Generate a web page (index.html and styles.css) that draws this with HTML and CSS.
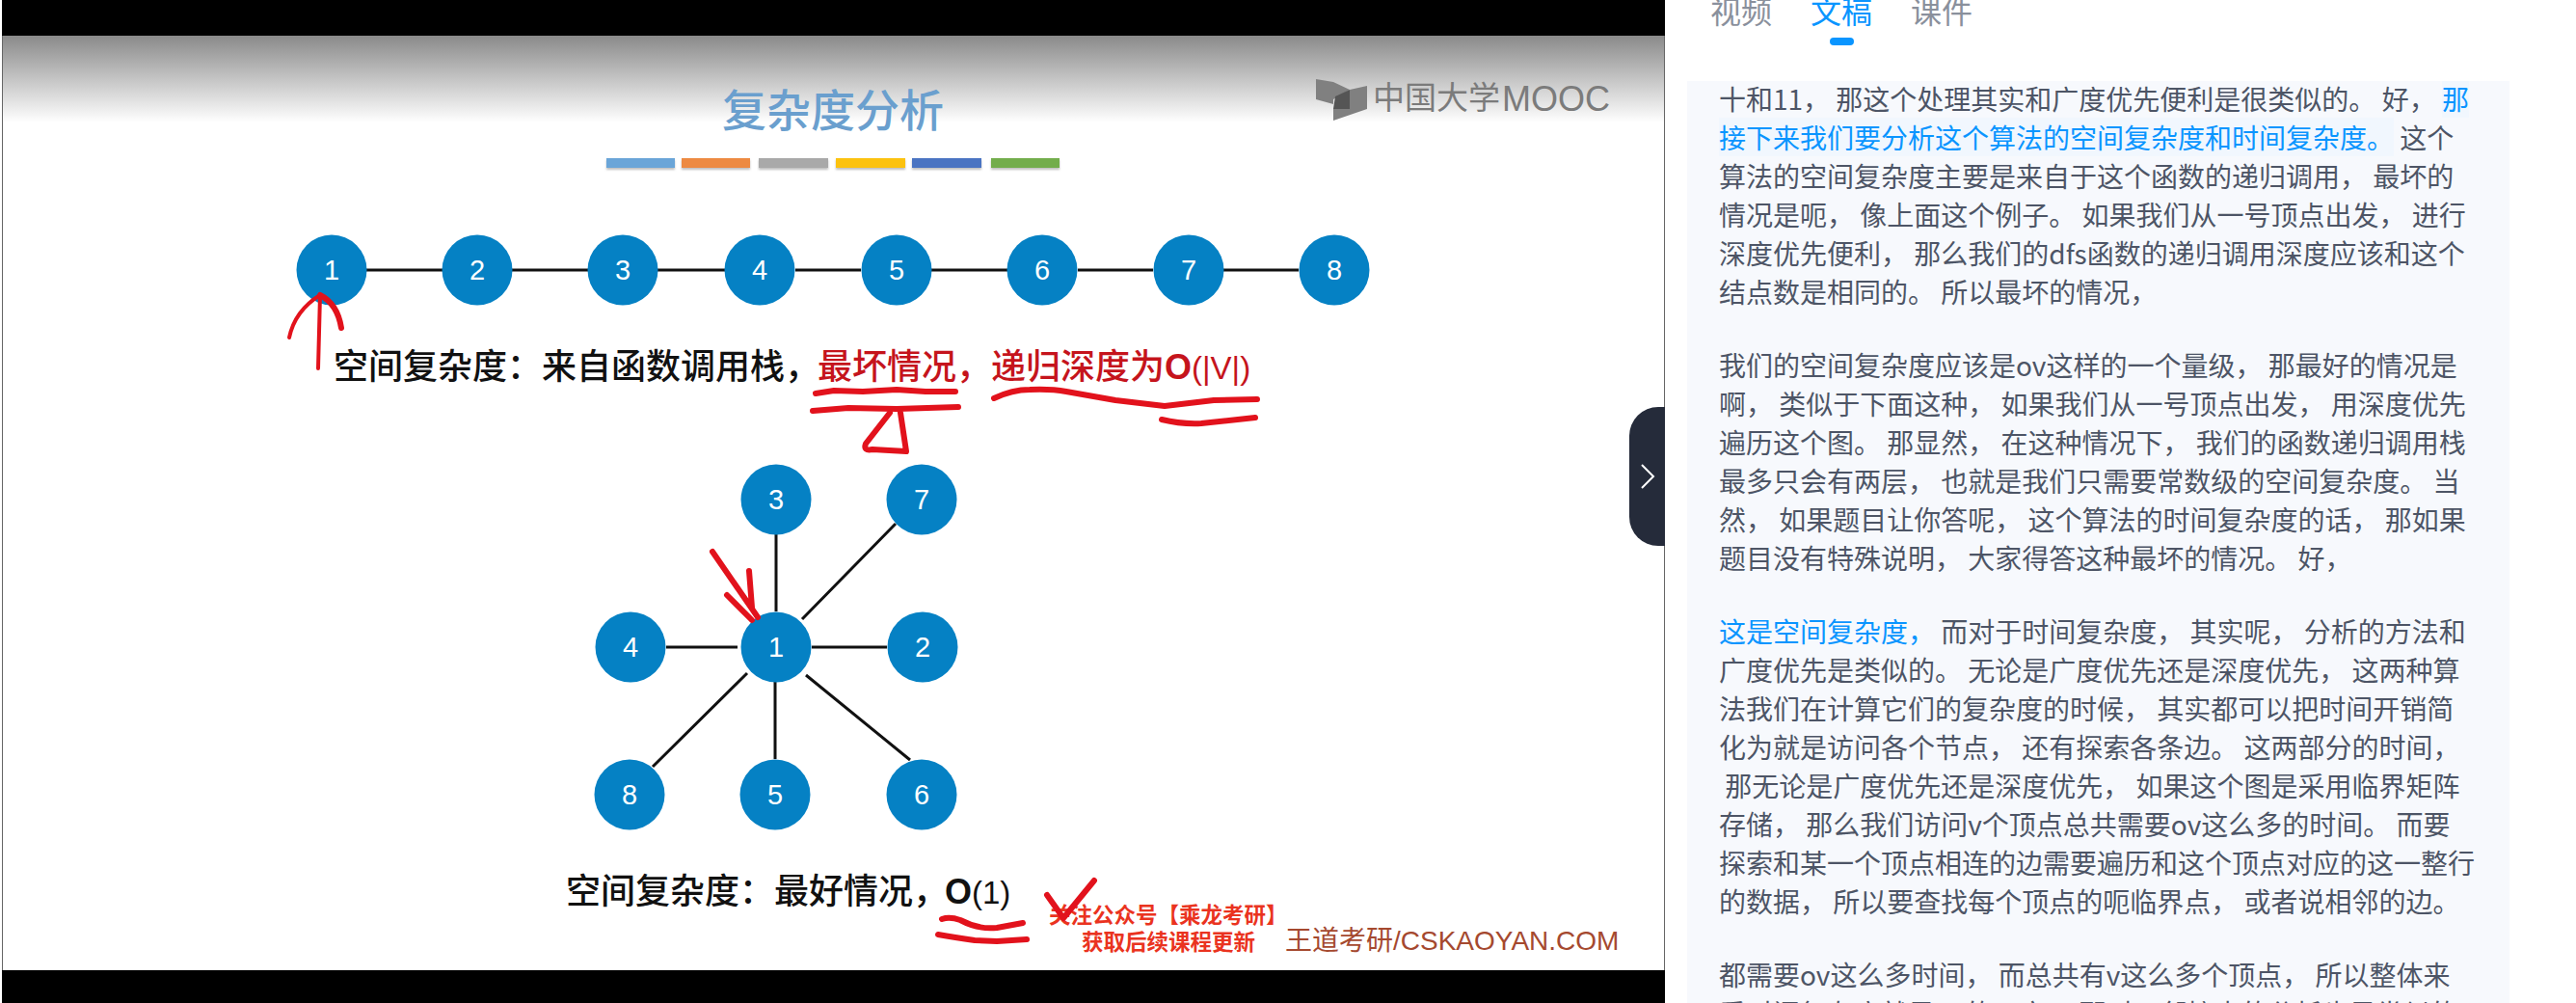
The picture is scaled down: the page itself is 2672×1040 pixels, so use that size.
FILE: index.html
```html
<!DOCTYPE html>
<html lang="zh-CN">
<head>
  <meta charset="UTF-8" />
  <title>复杂度分析</title>
  <link rel="stylesheet" href="styles.css">
</head>
<body>

  <div class="page">
    <div class="player">
      <div class="slide">
        <svg class="slide-art" viewBox="2 37 1725 969" width="1725" height="969">
          <text class="title" x="749" y="131">复杂度分析</text>
          <rect class="bar" x="629" y="164" width="71" height="10" fill="#6aa5d8"/>
          <rect class="bar" x="707" y="164" width="71" height="10" fill="#ed8a42"/>
          <rect class="bar" x="787" y="164" width="72" height="10" fill="#a9a9a9"/>
          <rect class="bar" x="867" y="164" width="72" height="10" fill="#fcc20f"/>
          <rect class="bar" x="946" y="164" width="72" height="10" fill="#4a74c2"/>
          <rect class="bar" x="1028" y="164" width="71" height="10" fill="#73ad4c"/>

          <!-- logo -->
          <path class="logo-left" d="M1365 82 L1383 85 L1400 93 L1383 103 L1383 108 L1365 103 Z"/>
          <path class="logo-left" d="M1383 108 L1383 125 L1418 113 L1383 113 Z"/>
          <path class="logo-mid" d="M1400 93 L1385 100 L1383 113 L1400 113 Z"/>
          <path class="logo-left" d="M1400 93 L1418 89 L1418 113 L1400 113 Z"/>
          <text class="logo-text" x="1424" y="113">中国大学<tspan class="logo-latin" x="1558" y="115">MOOC</tspan></text>

          <!-- chain -->
          <path class="edge" d="M380 280 H459 M531 280 H610 M682 280 H752 M825 280 H893 M966 280 H1045 M1118 280 H1196 M1269 280 H1347"/>
          <circle class="node" cx="344" cy="280" r="36.5"/><text class="num" x="344" y="290">1</text>
          <circle class="node" cx="495" cy="280" r="36.5"/><text class="num" x="495" y="290">2</text>
          <circle class="node" cx="646" cy="280" r="36.5"/><text class="num" x="646" y="290">3</text>
          <circle class="node" cx="788" cy="280" r="36.5"/><text class="num" x="788" y="290">4</text>
          <circle class="node" cx="930" cy="280" r="36.5"/><text class="num" x="930" y="290">5</text>
          <circle class="node" cx="1081" cy="280" r="36.5"/><text class="num" x="1081" y="290">6</text>
          <circle class="node" cx="1233" cy="280" r="36.5"/><text class="num" x="1233" y="290">7</text>
          <circle class="node" cx="1384" cy="280" r="36.5"/><text class="num" x="1384" y="290">8</text>

          <text class="line" x="346" y="393">空间复杂度：来自函数调用栈，<tspan class="line-red" x="848">最坏情况，</tspan></text>
          <text class="line line-red" x="1028" y="393">递归深度为<tspan class="line-o">O</tspan><tspan class="line-latin">(|V|)</tspan></text>

          <!-- star -->
          <path class="edge" d="M805 554 V634 M929 543 L832 642 M691 671 H765 M842 671 H920 M677 795 L775 698 M804 707 V787 M836 700 L944 788"/>
          <circle class="node" cx="805" cy="671" r="36.5"/><text class="num" x="805" y="681">1</text>
          <circle class="node" cx="805" cy="518" r="36.5"/><text class="num" x="805" y="528">3</text>
          <circle class="node" cx="956" cy="518" r="36.5"/><text class="num" x="956" y="528">7</text>
          <circle class="node" cx="654" cy="671" r="36.5"/><text class="num" x="654" y="681">4</text>
          <circle class="node" cx="957" cy="671" r="36.5"/><text class="num" x="957" y="681">2</text>
          <circle class="node" cx="653" cy="824" r="36.5"/><text class="num" x="653" y="834">8</text>
          <circle class="node" cx="804" cy="824" r="36.5"/><text class="num" x="804" y="834">5</text>
          <circle class="node" cx="956" cy="824" r="36.5"/><text class="num" x="956" y="834">6</text>

          <text class="line" x="587" y="937">空间复杂度：最好情况，<tspan class="line-o" x="980">O</tspan><tspan class="line-latin">(1)</tspan></text>

          <text class="promo" x="1088" y="957">关注公众号【乘龙考研】</text>
          <text class="promo" x="1122" y="985">获取后续课程更新</text>
          <text class="site" x="1333" y="985">王道考研/CSKAOYAN.COM</text>

          <!-- pen marks -->
          <path class="pen" d="M330 382 L332 306 M300 350 Q306 322 332 306"/>
          <path class="pen pen-wide" d="M332 306 Q350 315 354 340"/>
          <path class="pen pen-wide" d="M846 408 L865 405 L895 406 L930 404 L960 406 L991 406"/>
          <path class="pen pen-wide" d="M843 426 L880 423 L930 424 L994 422"/>
          <path class="pen pen-wide" d="M923 428 L898 460 Q895 468 905 466 L940 468 L934 428"/>
          <path class="pen pen-wide" d="M1031 413 Q1050 404 1068 404 Q1090 403 1106 406 L1157 415 L1208 421 L1259 415 L1304 414"/>
          <path class="pen pen-wide" d="M1205 435 Q1225 440 1246 439 L1302 433"/>
          <path class="pen pen-wide" d="M739 572 L786 640 M777 592 L780 630 M754 617 L780 643"/>
          <path class="pen pen-wide" d="M977 953 Q985 950 996 954 Q1015 964 1034 962 L1061 957"/>
          <path class="pen pen-wide" d="M973 969 Q990 972 1011 975 L1034 976 L1065 974"/>
          <path class="pen pen-wide" d="M1086 928 L1103 952 L1135 913"/>
        </svg>
      </div>
      <button class="collapse">
        <svg width="16" height="26" viewBox="0 0 16 26"><path d="M2 1 L14 13 L2 25" /></svg>
      </button>
    </div>

    <div class="side">
      <div class="tabs">
        <span class="tab">视频</span>
        <span class="tab tab-active">文稿</span>
        <span class="tab">课件</span>
      </div>
      <div class="transcript">
        <p>十和11， 那这个处理其实和广度优先便利是很类似的。 好， <span class="hl">那</span><br><span class="hl">接下来我们要分析这个算法的空间复杂度和时间复杂度。</span> 这个<br>算法的空间复杂度主要是来自于这个函数的递归调用， 最坏的<br>情况是呃， 像上面这个例子。 如果我们从一号顶点出发， 进行<br>深度优先便利， 那么我们的dfs函数的递归调用深度应该和这个<br>结点数是相同的。 所以最坏的情况，</p>
        <p>我们的空间复杂度应该是ov这样的一个量级， 那最好的情况是<br>啊， 类似于下面这种， 如果我们从一号顶点出发， 用深度优先<br>遍历这个图。 那显然， 在这种情况下， 我们的函数递归调用栈<br>最多只会有两层， 也就是我们只需要常数级的空间复杂度。 当<br>然， 如果题目让你答呢， 这个算法的时间复杂度的话， 那如果<br>题目没有特殊说明， 大家得答这种最坏的情况。 好，</p>
        <p><span class="blue">这是空间复杂度，</span> 而对于时间复杂度， 其实呢， 分析的方法和<br>广度优先是类似的。 无论是广度优先还是深度优先， 这两种算<br>法我们在计算它们的复杂度的时候， 其实都可以把时间开销简<br>化为就是访问各个节点， 还有探索各条边。 这两部分的时间，<br>&nbsp;那无论是广度优先还是深度优先， 如果这个图是采用临界矩阵<br>存储， 那么我们访问v个顶点总共需要ov这么多的时间。 而要<br>探索和某一个顶点相连的边需要遍历和这个顶点对应的这一整行<br>的数据， 所以要查找每个顶点的呃临界点， 或者说相邻的边。</p>
        <p>都需要ov这么多时间， 而总共有v这么多个顶点， 所以整体来<br>看时间复杂度就是ov的平方。 那对于邻接表的分析也是类似的</p>
      </div>
    </div>
  </div>

</body>
</html>
```

FILE: styles.css
```css
html, body {
  margin: 0;
  height: 100%;
  overflow: hidden;
  background: #fff;
}
.page {
  display: flex;
  height: 1040px;
  font-family: "Noto Sans CJK SC", "Liberation Sans", sans-serif;
}
.player {
  position: relative;
  width: 1725px;
  margin-left: 2px;
  flex: none;
  padding: 37px 0 34px;
  box-sizing: border-box;
  background: #000;
}
.slide {
  height: 969px;
  background: linear-gradient(#8a8a8a, #fff 90px);
  border-left: 1px solid #666;
  border-right: 1px solid #666;
  box-sizing: border-box;
  overflow: hidden;
}
.slide-art {
  display: block;
  margin-left: -1px;
}
.title {
  font-size: 46px;
  font-weight: 500;
  fill: #6a9fce;
}
.bar {
  filter: drop-shadow(0 2px 1px rgba(0, 0, 0, .25));
}
.logo-left { fill: #808080; }
.logo-mid { fill: #555; }
.logo-text {
  font-size: 33px;
  fill: #7b7b7b;
}
.logo-latin {
  font-family: "Liberation Sans", sans-serif;
  font-size: 36px;
}
.edge {
  fill: none;
  stroke: #111;
  stroke-width: 3;
}
.node { fill: #0581c4; }
.num {
  font-family: "Liberation Sans", sans-serif;
  font-size: 29px;
  fill: #fff;
  text-anchor: middle;
}
.line {
  font-size: 36px;
  font-weight: 500;
  fill: #111;
}
.line-red { fill: #c5141c; }
.line-o {
  font-family: "Liberation Sans", sans-serif;
  font-weight: 700;
}
.line-latin {
  font-family: "Liberation Sans", sans-serif;
  font-size: 33px;
  font-weight: 400;
}
.promo {
  font-size: 22.5px;
  font-weight: 700;
  fill: #ea3320;
}
.site {
  font-size: 28px;
  font-family: "Liberation Sans", "Noto Sans CJK SC", sans-serif;
  fill: #a5492f;
}
.pen {
  fill: none;
  stroke: #e2121c;
  stroke-width: 4;
  stroke-linecap: round;
  stroke-linejoin: round;
}
.pen-wide { stroke-width: 6; }
.collapse {
  position: absolute;
  right: 0;
  top: 422px;
  width: 37px;
  height: 144px;
  padding: 0;
  border: none;
  border-radius: 30px 0 0 30px;
  background: #252b3a;
  display: flex;
  align-items: center;
  justify-content: center;
}
.collapse path {
  fill: none;
  stroke: #fff;
  stroke-width: 2;
}
.side {
  flex: 1;
  min-width: 0;
  display: flex;
  flex-direction: column;
  padding-left: 23px;
  padding-right: 69px;
}
.tabs {
  display: flex;
  gap: 40px;
  height: 84px;
  margin-left: 24px;
  flex: none;
}
.tab {
  font-size: 32px;
  line-height: 40px;
  margin-top: -10px;
  color: #8a909c;
  position: relative;
  height: 40px;
}
.tab-active { color: #0a95ff; }
.tab-active::after {
  content: "";
  position: absolute;
  left: 20px;
  top: 49px;
  width: 25px;
  height: 8px;
  border-radius: 4px;
  background: #0a95ff;
}
.transcript {
  flex: 1;
  overflow: hidden;
  background: #f7f9fd;
  padding: 0 0 0 33px;
  font-size: 28px;
  line-height: 40px;
  color: #4d5566;
  white-space: nowrap;
}
.transcript p {
  margin: 0 0 36px;
}
.transcript p:first-child {
  margin-top: -2px;
}
.hl {
  color: #0a95ff;
  background: #f1f7fe;
}
.blue { color: #0a95ff; }
```
